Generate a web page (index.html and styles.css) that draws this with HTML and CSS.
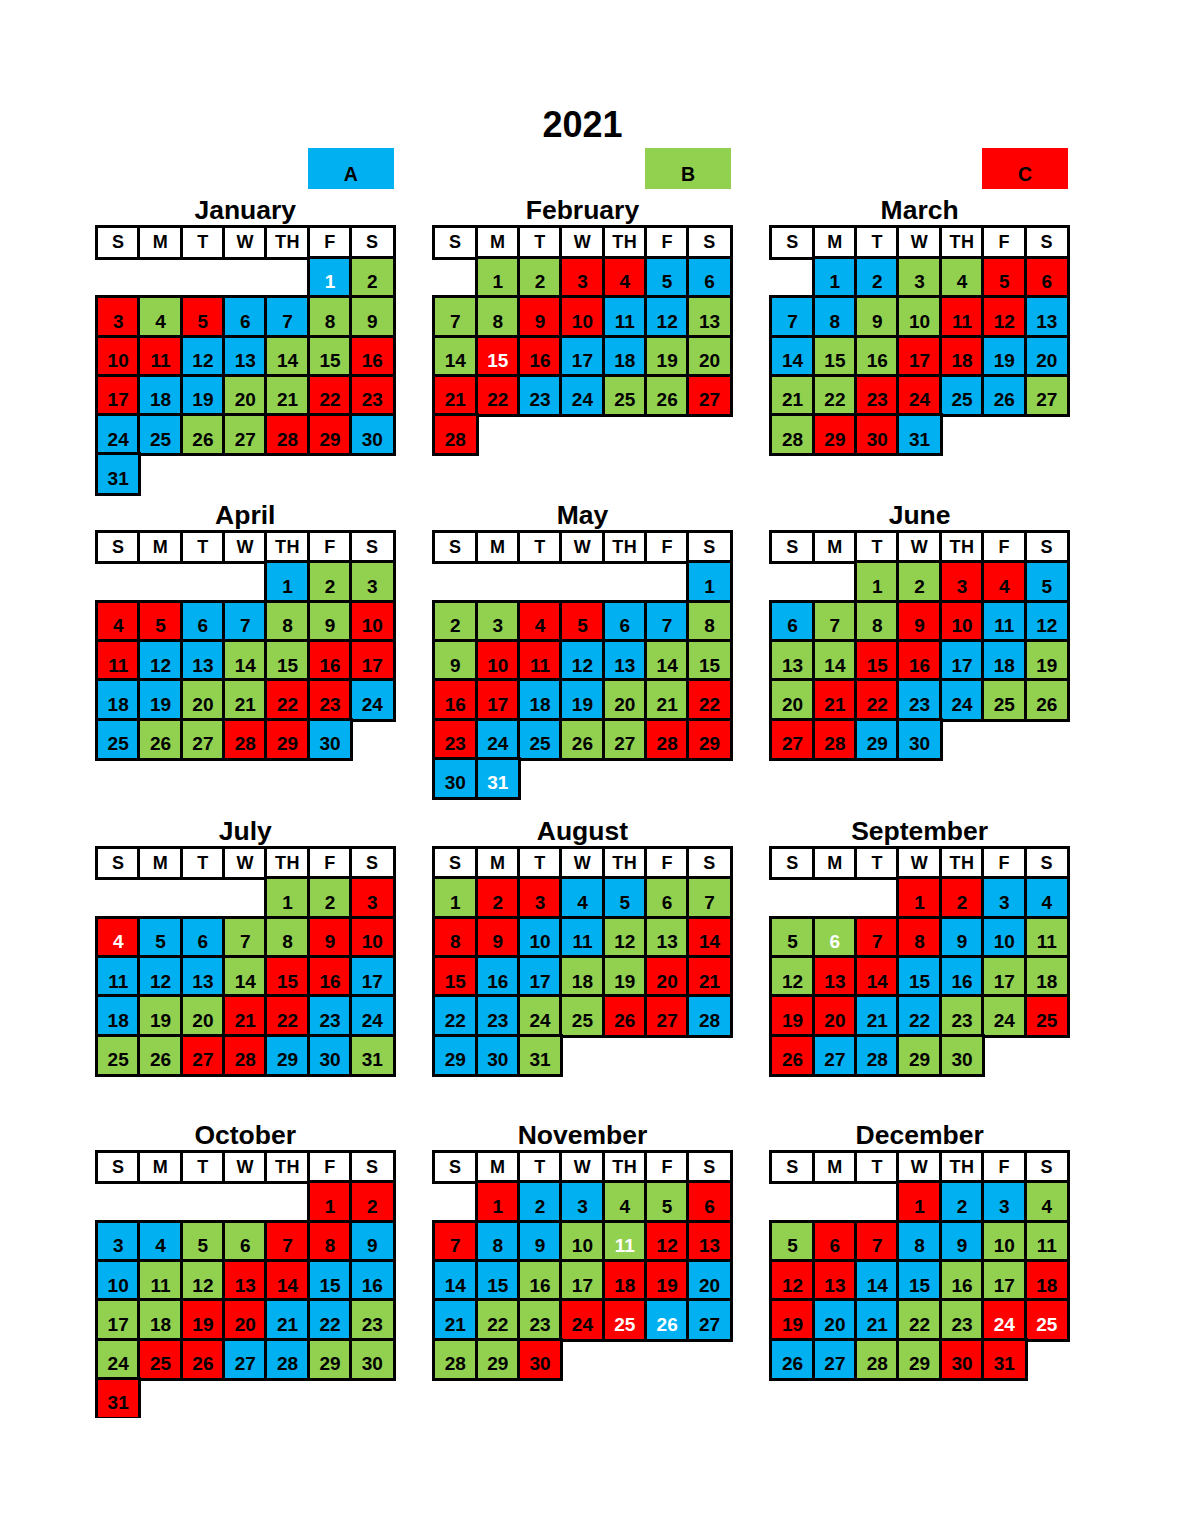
FILE: index.html
```html
<!DOCTYPE html>
<html lang="en">
<head>
<meta charset="utf-8">
<title>2021</title>
<link rel="stylesheet" href="styles.css">
</head>
<body>
<div class="page">
  <h1 class="year">2021</h1>
  <div class="legend">
    <div class="key b">A</div>
    <div class="key g">B</div>
    <div class="key r">C</div>
  </div>
  <div class="months">
    <section class="month">
      <div class="title">January</div>
      <div class="cal">
        <div class="h">S</div><div class="h">M</div><div class="h">T</div><div class="h">W</div><div class="h">TH</div><div class="h">F</div><div class="h">S</div>
        <div class="d b w c6">1</div><div class="d g">2</div>
        <div class="d r">3</div><div class="d g">4</div><div class="d r">5</div><div class="d b">6</div><div class="d b">7</div><div class="d g">8</div><div class="d g">9</div>
        <div class="d r">10</div><div class="d r">11</div><div class="d b">12</div><div class="d b">13</div><div class="d g">14</div><div class="d g">15</div><div class="d r">16</div>
        <div class="d r">17</div><div class="d b">18</div><div class="d b">19</div><div class="d g">20</div><div class="d g">21</div><div class="d r">22</div><div class="d r">23</div>
        <div class="d b">24</div><div class="d b">25</div><div class="d g">26</div><div class="d g">27</div><div class="d r">28</div><div class="d r">29</div><div class="d b">30</div>
        <div class="d b">31</div>
      </div>
    </section>
    <section class="month">
      <div class="title">February</div>
      <div class="cal">
        <div class="h">S</div><div class="h">M</div><div class="h">T</div><div class="h">W</div><div class="h">TH</div><div class="h">F</div><div class="h">S</div>
        <div class="d g c2">1</div><div class="d g">2</div><div class="d r">3</div><div class="d r">4</div><div class="d b">5</div><div class="d b">6</div>
        <div class="d g">7</div><div class="d g">8</div><div class="d r">9</div><div class="d r">10</div><div class="d b">11</div><div class="d b">12</div><div class="d g">13</div>
        <div class="d g">14</div><div class="d r w">15</div><div class="d r">16</div><div class="d b">17</div><div class="d b">18</div><div class="d g">19</div><div class="d g">20</div>
        <div class="d r">21</div><div class="d r">22</div><div class="d b">23</div><div class="d b">24</div><div class="d g">25</div><div class="d g">26</div><div class="d r">27</div>
        <div class="d r">28</div>
      </div>
    </section>
    <section class="month">
      <div class="title">March</div>
      <div class="cal">
        <div class="h">S</div><div class="h">M</div><div class="h">T</div><div class="h">W</div><div class="h">TH</div><div class="h">F</div><div class="h">S</div>
        <div class="d b c2">1</div><div class="d b">2</div><div class="d g">3</div><div class="d g">4</div><div class="d r">5</div><div class="d r">6</div>
        <div class="d b">7</div><div class="d b">8</div><div class="d g">9</div><div class="d g">10</div><div class="d r">11</div><div class="d r">12</div><div class="d b">13</div>
        <div class="d b">14</div><div class="d g">15</div><div class="d g">16</div><div class="d r">17</div><div class="d r">18</div><div class="d b">19</div><div class="d b">20</div>
        <div class="d g">21</div><div class="d g">22</div><div class="d r">23</div><div class="d r">24</div><div class="d b">25</div><div class="d b">26</div><div class="d g">27</div>
        <div class="d g">28</div><div class="d r">29</div><div class="d r">30</div><div class="d b">31</div>
      </div>
    </section>

    <section class="month">
      <div class="title">April</div>
      <div class="cal">
        <div class="h">S</div><div class="h">M</div><div class="h">T</div><div class="h">W</div><div class="h">TH</div><div class="h">F</div><div class="h">S</div>
        <div class="d b c5">1</div><div class="d g">2</div><div class="d g">3</div>
        <div class="d r">4</div><div class="d r">5</div><div class="d b">6</div><div class="d b">7</div><div class="d g">8</div><div class="d g">9</div><div class="d r">10</div>
        <div class="d r">11</div><div class="d b">12</div><div class="d b">13</div><div class="d g">14</div><div class="d g">15</div><div class="d r">16</div><div class="d r">17</div>
        <div class="d b">18</div><div class="d b">19</div><div class="d g">20</div><div class="d g">21</div><div class="d r">22</div><div class="d r">23</div><div class="d b">24</div>
        <div class="d b">25</div><div class="d g">26</div><div class="d g">27</div><div class="d r">28</div><div class="d r">29</div><div class="d b">30</div>
      </div>
    </section>
    <section class="month">
      <div class="title">May</div>
      <div class="cal">
        <div class="h">S</div><div class="h">M</div><div class="h">T</div><div class="h">W</div><div class="h">TH</div><div class="h">F</div><div class="h">S</div>
        <div class="d b c7">1</div>
        <div class="d g">2</div><div class="d g">3</div><div class="d r">4</div><div class="d r">5</div><div class="d b">6</div><div class="d b">7</div><div class="d g">8</div>
        <div class="d g">9</div><div class="d r">10</div><div class="d r">11</div><div class="d b">12</div><div class="d b">13</div><div class="d g">14</div><div class="d g">15</div>
        <div class="d r">16</div><div class="d r">17</div><div class="d b">18</div><div class="d b">19</div><div class="d g">20</div><div class="d g">21</div><div class="d r">22</div>
        <div class="d r">23</div><div class="d b">24</div><div class="d b">25</div><div class="d g">26</div><div class="d g">27</div><div class="d r">28</div><div class="d r">29</div>
        <div class="d b">30</div><div class="d b w">31</div>
      </div>
    </section>
    <section class="month">
      <div class="title">June</div>
      <div class="cal">
        <div class="h">S</div><div class="h">M</div><div class="h">T</div><div class="h">W</div><div class="h">TH</div><div class="h">F</div><div class="h">S</div>
        <div class="d g c3">1</div><div class="d g">2</div><div class="d r">3</div><div class="d r">4</div><div class="d b">5</div>
        <div class="d b">6</div><div class="d g">7</div><div class="d g">8</div><div class="d r">9</div><div class="d r">10</div><div class="d b">11</div><div class="d b">12</div>
        <div class="d g">13</div><div class="d g">14</div><div class="d r">15</div><div class="d r">16</div><div class="d b">17</div><div class="d b">18</div><div class="d g">19</div>
        <div class="d g">20</div><div class="d r">21</div><div class="d r">22</div><div class="d b">23</div><div class="d b">24</div><div class="d g">25</div><div class="d g">26</div>
        <div class="d r">27</div><div class="d r">28</div><div class="d b">29</div><div class="d b">30</div>
      </div>
    </section>

    <section class="month">
      <div class="title">July</div>
      <div class="cal">
        <div class="h">S</div><div class="h">M</div><div class="h">T</div><div class="h">W</div><div class="h">TH</div><div class="h">F</div><div class="h">S</div>
        <div class="d g c5">1</div><div class="d g">2</div><div class="d r">3</div>
        <div class="d r w">4</div><div class="d b">5</div><div class="d b">6</div><div class="d g">7</div><div class="d g">8</div><div class="d r">9</div><div class="d r">10</div>
        <div class="d b">11</div><div class="d b">12</div><div class="d b">13</div><div class="d g">14</div><div class="d r">15</div><div class="d r">16</div><div class="d b">17</div>
        <div class="d b">18</div><div class="d g">19</div><div class="d g">20</div><div class="d r">21</div><div class="d r">22</div><div class="d b">23</div><div class="d b">24</div>
        <div class="d g">25</div><div class="d g">26</div><div class="d r">27</div><div class="d r">28</div><div class="d b">29</div><div class="d b">30</div><div class="d g">31</div>
      </div>
    </section>
    <section class="month">
      <div class="title">August</div>
      <div class="cal">
        <div class="h">S</div><div class="h">M</div><div class="h">T</div><div class="h">W</div><div class="h">TH</div><div class="h">F</div><div class="h">S</div>
        <div class="d g">1</div><div class="d r">2</div><div class="d r">3</div><div class="d b">4</div><div class="d b">5</div><div class="d g">6</div><div class="d g">7</div>
        <div class="d r">8</div><div class="d r">9</div><div class="d b">10</div><div class="d b">11</div><div class="d g">12</div><div class="d g">13</div><div class="d r">14</div>
        <div class="d r">15</div><div class="d b">16</div><div class="d b">17</div><div class="d g">18</div><div class="d g">19</div><div class="d r">20</div><div class="d r">21</div>
        <div class="d b">22</div><div class="d b">23</div><div class="d g">24</div><div class="d g">25</div><div class="d r">26</div><div class="d r">27</div><div class="d b">28</div>
        <div class="d b">29</div><div class="d b">30</div><div class="d g">31</div>
      </div>
    </section>
    <section class="month">
      <div class="title">September</div>
      <div class="cal">
        <div class="h">S</div><div class="h">M</div><div class="h">T</div><div class="h">W</div><div class="h">TH</div><div class="h">F</div><div class="h">S</div>
        <div class="d r c4">1</div><div class="d r">2</div><div class="d b">3</div><div class="d b">4</div>
        <div class="d g">5</div><div class="d g w">6</div><div class="d r">7</div><div class="d r">8</div><div class="d b">9</div><div class="d b">10</div><div class="d g">11</div>
        <div class="d g">12</div><div class="d r">13</div><div class="d r">14</div><div class="d b">15</div><div class="d b">16</div><div class="d g">17</div><div class="d g">18</div>
        <div class="d r">19</div><div class="d r">20</div><div class="d b">21</div><div class="d b">22</div><div class="d g">23</div><div class="d g">24</div><div class="d r">25</div>
        <div class="d r">26</div><div class="d b">27</div><div class="d b">28</div><div class="d g">29</div><div class="d g">30</div>
      </div>
    </section>

    <section class="month">
      <div class="title">October</div>
      <div class="cal">
        <div class="h">S</div><div class="h">M</div><div class="h">T</div><div class="h">W</div><div class="h">TH</div><div class="h">F</div><div class="h">S</div>
        <div class="d r c6">1</div><div class="d r">2</div>
        <div class="d b">3</div><div class="d b">4</div><div class="d g">5</div><div class="d g">6</div><div class="d r">7</div><div class="d r">8</div><div class="d b">9</div>
        <div class="d b">10</div><div class="d g">11</div><div class="d g">12</div><div class="d r">13</div><div class="d r">14</div><div class="d b">15</div><div class="d b">16</div>
        <div class="d g">17</div><div class="d g">18</div><div class="d r">19</div><div class="d r">20</div><div class="d b">21</div><div class="d b">22</div><div class="d g">23</div>
        <div class="d g">24</div><div class="d r">25</div><div class="d r">26</div><div class="d b">27</div><div class="d b">28</div><div class="d g">29</div><div class="d g">30</div>
        <div class="d r">31</div>
      </div>
    </section>
    <section class="month">
      <div class="title">November</div>
      <div class="cal">
        <div class="h">S</div><div class="h">M</div><div class="h">T</div><div class="h">W</div><div class="h">TH</div><div class="h">F</div><div class="h">S</div>
        <div class="d r c2">1</div><div class="d b">2</div><div class="d b">3</div><div class="d g">4</div><div class="d g">5</div><div class="d r">6</div>
        <div class="d r">7</div><div class="d b">8</div><div class="d b">9</div><div class="d g">10</div><div class="d g w">11</div><div class="d r">12</div><div class="d r">13</div>
        <div class="d b">14</div><div class="d b">15</div><div class="d g">16</div><div class="d g">17</div><div class="d r">18</div><div class="d r">19</div><div class="d b">20</div>
        <div class="d b">21</div><div class="d g">22</div><div class="d g">23</div><div class="d r">24</div><div class="d r w">25</div><div class="d b w">26</div><div class="d b">27</div>
        <div class="d g">28</div><div class="d g">29</div><div class="d r">30</div>
      </div>
    </section>
    <section class="month">
      <div class="title">December</div>
      <div class="cal">
        <div class="h">S</div><div class="h">M</div><div class="h">T</div><div class="h">W</div><div class="h">TH</div><div class="h">F</div><div class="h">S</div>
        <div class="d r c4">1</div><div class="d b">2</div><div class="d b">3</div><div class="d g">4</div>
        <div class="d g">5</div><div class="d r">6</div><div class="d r">7</div><div class="d b">8</div><div class="d b">9</div><div class="d g">10</div><div class="d g">11</div>
        <div class="d r">12</div><div class="d r">13</div><div class="d b">14</div><div class="d b">15</div><div class="d g">16</div><div class="d g">17</div><div class="d r">18</div>
        <div class="d r">19</div><div class="d b">20</div><div class="d b">21</div><div class="d g">22</div><div class="d g">23</div><div class="d r w">24</div><div class="d r w">25</div>
        <div class="d b">26</div><div class="d b">27</div><div class="d g">28</div><div class="d g">29</div><div class="d r">30</div><div class="d r">31</div>
      </div>
    </section>
  </div>
</div>
</body>
</html>
```
FILE: styles.css
```css
* {
  box-sizing: border-box;
}

body {
  margin: 0;
  background: #ffffff;
  color: #000000;
  font-family: "Liberation Sans", Arial, sans-serif;
}

.page {
  width: 971px;
  margin-left: 97px;
  padding-top: 104.5px;
}

.year {
  margin: 0;
  height: 40px;
  font-size: 36px;
  font-weight: bold;
  line-height: 40px;
  text-align: center;
}

.legend {
  display: grid;
  grid-template-columns: repeat(3, 296.5px);
  column-gap: 40.7px;
  margin-top: 3.8px;
  height: 41px;
}

.key {
  justify-self: end;
  width: 85.5px;
  height: 41px;
  padding-top: 10.9px;
  font-size: 19.5px;
  font-weight: bold;
  line-height: 30.1px;
  text-align: center;
}

.months {
  display: grid;
  grid-template-columns: repeat(3, 296.5px);
  grid-template-rows: 304.5px 316px 304px auto;
  column-gap: 40.7px;
  align-items: start;
  margin-top: 7.2px;
}

.title {
  height: 28px;
  margin-bottom: 3px;
  font-size: 26.5px;
  font-weight: bold;
  line-height: 28px;
  text-align: center;
}

.cal {
  display: grid;
  grid-template-columns: repeat(7, 1fr);
  grid-template-rows: 30.5px;
  grid-auto-rows: 39.3px;
}

.h,
.d {
  outline: 3px solid #000000;
  outline-offset: -1.5px;
  font-weight: bold;
  text-align: center;
}

.h {
  background: #ffffff;
  padding-top: 1px;
  font-size: 18px;
  line-height: 29.5px;
  letter-spacing: 0.5px;
}

.d {
  padding-top: 9.5px;
  font-size: 19px;
  line-height: 29.8px;
}

.b { background: #00b0f0; }
.g { background: #92d050; }
.r { background: #ff0000; }
.w { color: #ffffff; }

.c2 { grid-column-start: 2; }
.c3 { grid-column-start: 3; }
.c4 { grid-column-start: 4; }
.c5 { grid-column-start: 5; }
.c6 { grid-column-start: 6; }
.c7 { grid-column-start: 7; }
```
